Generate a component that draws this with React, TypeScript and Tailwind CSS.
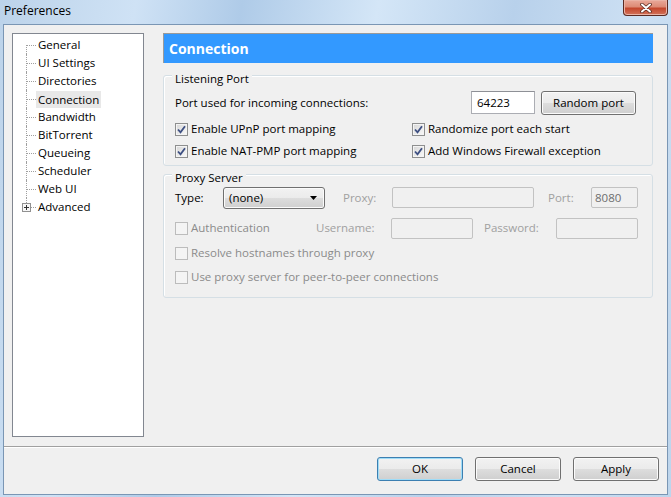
import type { ReactNode } from 'react'

const treeItems = ['General', 'UI Settings', 'Directories', 'Connection', 'Bandwidth', 'BitTorrent', 'Queueing', 'Scheduler', 'Web UI', 'Advanced']

function Check({ checked, disabled }: { checked?: boolean; disabled?: boolean }) {
  return (
    <span
      className={`w-[13px] h-[13px] shrink-0 border flex items-center justify-center ${
        disabled ? 'border-[#bcbcbc] bg-[#f4f4f4]' : 'border-[#8e8f8f] bg-[linear-gradient(135deg,#d6d6d6,#fafafa)] shadow-[inset_0_0_0_1px_#f4f4f4]'
      }`}
    >
      {checked && (
        <svg width="11" height="11" viewBox="0 0 11 11">
          <polyline points="2,5.5 4.5,8.3 9,2.2" fill="none" stroke="#3d4f82" strokeWidth="1.8" />
        </svg>
      )}
    </span>
  )
}

function CheckRow({ label, checked, disabled }: { label: string; checked?: boolean; disabled?: boolean }) {
  return (
    <div className="flex items-center gap-[3px] h-[18px]">
      <Check checked={checked} disabled={disabled} />
      <span className={disabled ? 'text-[#8b8b8b]' : ''}>{label}</span>
    </div>
  )
}

function Group({ title, className, children }: { title: string; className: string; children: ReactNode }) {
  return (
    <div className={`relative border border-[#d5dfe5] rounded-[3px] shadow-[inset_1px_1px_0_#ffffff] ${className}`}>
      <span className="absolute left-[8px] top-[-4px] px-[3px] bg-[#f0f0f0] leading-[14px]">{title}</span>
      {children}
    </div>
  )
}

const face =
  'rounded-[3px] border bg-[linear-gradient(#f2f2f2_0%,#ebebeb_50%,#dddddd_51%,#cfcfcf_100%)] flex items-center'
const btn = `${face} h-[24px] justify-center`

function Tree() {
  return (
    <div className="w-[133px] h-[404px] bg-white border border-[#828790] pt-[2px]">
      {treeItems.map((it, i) => {
        const first = i === 0
        const last = i === treeItems.length - 1
        return (
          <div key={it} className="flex h-[18px] items-center">
            <div className="relative w-[25px] h-full">
              <div
                className={`absolute left-[13px] border-l border-dotted border-[#a0a0a0] ${
                  first ? 'top-[9px] bottom-0' : last ? 'top-0 h-[5px]' : 'top-0 bottom-0'
                }`}
              />
              <div
                className={`absolute top-[9px] border-t border-dotted border-[#a0a0a0] ${last ? 'left-[18px] w-[5px]' : 'left-[14px] w-[9px]'}`}
              />
              {last && (
                <svg className="absolute left-[9px] top-[5px]" width="9" height="9" viewBox="0 0 9 9">
                  <rect x="0.5" y="0.5" width="8" height="8" fill="#f7f7f7" stroke="#919191" />
                  <path d="M2 4.5h5M4.5 2v5" stroke="#333" strokeWidth="1" />
                </svg>
              )}
            </div>
            <span className={i === 3 ? 'bg-[#e8e8e8] px-[2px] -ml-[2px] leading-[17px]' : ''}>{it}</span>
          </div>
        )
      })}
    </div>
  )
}

export default function App() {
  return (
    <div className="w-[671px] h-[497px] flex flex-col px-[3px] pb-[2px] overflow-hidden bg-[linear-gradient(100deg,#bcd3ea_0%,#cfe2f5_18%,#afcbe8_32%,#d4e6f7_50%,#b8d1eb_68%,#cde0f3_85%,#bdd5ec_100%)] font-['Open_Sans',sans-serif] text-[11.5px] text-black">
      {/* title bar */}
      <div className="h-[24px] flex items-start">
        <span className="pl-[1px] pt-[3px] leading-[16px] text-[12px]">Preferences</span>
        <div className="ml-auto w-[45px] h-[16px] rounded-b-[4px] border border-t-0 border-[#5b2a22] bg-[linear-gradient(#e9a99a_0%,#dd8b76_45%,#c4472d_55%,#d2735a_100%)] shadow-[inset_0_0_0_1px_#eab3a5] flex items-center justify-center">
          <svg width="12" height="10" viewBox="0 0 12 10">
            <path d="M2 1.5l8 7M10 1.5l-8 7" stroke="#5a2a20" strokeWidth="3.6" strokeLinecap="round" />
            <path d="M2 1.5l8 7M10 1.5l-8 7" stroke="#ffffff" strokeWidth="2" strokeLinecap="round" />
          </svg>
        </div>
      </div>

      {/* client area */}
      <div className="flex-1 flex flex-col border border-[#7a96b4] bg-[#f0f0f0]">
        <div className="flex pt-[8px] pl-[8px] pr-[14px]">
          <Tree />
          <div className="ml-[19px] flex-1 flex flex-col">
            <div className="h-[30px] bg-[#3399ff] border-t border-l border-[#9a9a9a] flex items-center pl-[5px] text-white font-bold text-[14px]">
              Connection
            </div>

            <Group title="Listening Port" className="mt-[12px] h-[91px] pt-[15px] pl-[11px] pr-[16px]">
              <div className="flex items-center h-[23px]">
                <span>Port used for incoming connections:</span>
                <div className="ml-auto w-[64px] h-[23px] bg-white border border-[#abadb3] border-t-[#8e9096] flex items-center pl-[5px]">64223</div>
                <button className={`${btn} border-[#707070] shadow-[inset_0_0_0_1px_#fbfbfb] ml-[6px] w-[95px] h-[22px]`}>Random port</button>
              </div>
              <div className="grid grid-cols-[237px_1fr] gap-y-[4px] mt-[6px]">
                <CheckRow label="Enable UPnP port mapping" checked />
                <CheckRow label="Randomize port each start" checked />
                <CheckRow label="Enable NAT-PMP port mapping" checked />
                <CheckRow label="Add Windows Firewall exception" checked />
              </div>
            </Group>

            <Group title="Proxy Server" className="mt-[8px] h-[124px] pt-[11px] pl-[11px] pr-[14px]">
              <div className="flex items-center h-[23px]">
                <span className="w-[48px]">Type:</span>
                <div className={`${face} border-[#707070] shadow-[inset_0_0_0_1px_#fbfbfb] w-[102px] h-[22px] justify-between pl-[5px] pr-[7px]`}>
                  <span>(none)</span>
                  <svg width="7" height="4" viewBox="0 0 7 4">
                    <path d="M0 0h7L3.5 4z" fill="#000" />
                  </svg>
                </div>
                <span className="ml-[18px] w-[49px] text-[#a0a0a0]">Proxy:</span>
                <div className="w-[142px] h-[21px] border border-[#c2c2c2] rounded-[2px]" />
                <span className="ml-[14px] w-[43px] text-[#a0a0a0]">Port:</span>
                <div className="w-[47px] h-[21px] border border-[#c2c2c2] rounded-[2px] flex items-center pl-[3px] text-[#6d6d6d]">8080</div>
              </div>
              <div className="flex items-center h-[22px] mt-[8px]">
                <div className="w-[141px]">
                  <CheckRow label="Authentication" disabled />
                </div>
                <span className="w-[75px] text-[#a0a0a0]">Username:</span>
                <div className="w-[82px] h-[21px] border border-[#c2c2c2] rounded-[2px]" />
                <span className="ml-[11px] w-[72px] text-[#a0a0a0]">Password:</span>
                <div className="w-[82px] h-[21px] border border-[#c2c2c2] rounded-[2px]" />
              </div>
              <div className="mt-[5px]">
                <CheckRow label="Resolve hostnames through proxy" disabled />
              </div>
              <div className="mt-[6px]">
                <CheckRow label="Use proxy server for peer-to-peer connections" disabled />
              </div>
            </Group>
          </div>
        </div>

        <div className="mt-[9px] border-t border-[#a0a0a0] border-b border-b-white" />

        <div className="flex justify-end gap-[12px] pt-[9px] pr-[8px]">
          <button className={`${btn} w-[86px] border-[#3c7fb1] shadow-[inset_0_0_0_1px_#9fdcf7]`}>OK</button>
          <button className={`${btn} w-[86px] border-[#707070] shadow-[inset_0_0_0_1px_#fbfbfb]`}>Cancel</button>
          <button className={`${btn} w-[86px] border-[#707070] shadow-[inset_0_0_0_1px_#fbfbfb]`}>Apply</button>
        </div>
      </div>
    </div>
  )
}
